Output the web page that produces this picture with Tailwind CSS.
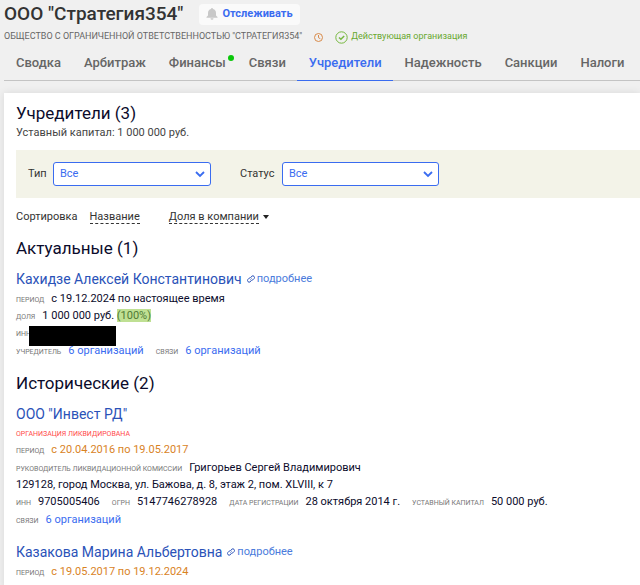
<!DOCTYPE html>
<html lang="ru">
<head>
  <meta charset="UTF-8">
  <meta name="viewport" content="width=device-width, initial-scale=1.0">
  <title>ООО "Стратегия354" - Учредители</title>
  <script src="https://cdn.jsdelivr.net/npm/@tailwindcss/browser@4"></script>
</head>
<body class="bg-[#f0f0f0] font-['Roboto','Liberation_Sans',sans-serif] text-[11px] text-[#0b0b2b] overflow-x-hidden">
  <!-- Company header -->
  <header class="pl-1">
    <div class="flex items-center h-7 gap-4">
      <h1 class="text-[19px] leading-7 font-medium text-[#333] whitespace-nowrap">ООО "Стратегия354"</h1>
      <button type="button" class="flex items-center gap-1 h-[21px] px-[7px] rounded bg-[#fafafa] font-bold text-[#3a6cf0]">
        <svg class="w-3 h-3" viewBox="0 0 12 12" fill="#c8c8c8"><path d="M6 0a1 1 0 0 1 1 1c2 .5 3 2 3 4v2.500L11.500 9v.8H.5V9L2 7.500V5c0-2 1-3.500 3-4a1 1 0 0 1 1-1zM4.500 10.300h3a1.500 1.500 0 0 1-3 0z"/></svg>
        Отслеживать
      </button>
    </div>
    <div class="flex items-center h-[18px] whitespace-nowrap text-[9px] text-[#666]">
      <span>ОБЩЕСТВО С ОГРАНИЧЕННОЙ ОТВЕТСТВЕННОСТЬЮ "СТРАТЕГИЯ354"</span>
      <svg class="ml-3 w-[9px] h-[9px]" viewBox="0 0 9 9" fill="none" stroke="#d98a4a"><circle cx="4.500" cy="4.500" r="4"/><path d="M4.500 2v2.700l1.800 1"/></svg>
      <span class="ml-3 flex items-center gap-[3px] text-[#69a82f]">
        <svg class="w-[13px] h-[13px]" viewBox="0 0 13 13" fill="none" stroke="#76b83f"><circle cx="6.500" cy="6.500" r="5.700"/><path d="M4 6.500l1.900 1.800 3.300-3.400" stroke-width="1.500"/></svg>
        Действующая организация
      </span>
    </div>
    <nav class="flex h-[35px] border-b border-[#c4c4c4] text-[13px] leading-[34px] font-medium text-[#666] whitespace-nowrap">
      <a href="#" class="pl-3 pr-[11px]">Сводка</a>
      <a href="#" class="pl-3 pr-[11px]">Арбитраж</a>
      <a href="#" class="pl-3 pr-[11px] relative">Финансы<span class="absolute right-[3px] top-[9px] w-[6px] h-[6px] rounded-full bg-[#0ac70a]"></span></a>
      <a href="#" class="pl-3 pr-[11px]">Связи</a>
      <a href="#" class="pl-3 pr-[11px] h-[35px] text-[#3a6cf0] border-b border-[#3a6cf0]">Учредители</a>
      <a href="#" class="pl-3 pr-[11px]">Надежность</a>
      <a href="#" class="pl-3 pr-[11px]">Санкции</a>
      <a href="#" class="pl-3 pr-[11px]">Налоги</a>
    </nav>
  </header>

  <main class="mt-3 ml-1 pl-3 pt-2 pb-2 bg-white shadow-[0_0_8px_rgba(0,0,0,0.1)] whitespace-nowrap">
    <h2 class="text-[17px] leading-6">Учредители (3)</h2>
    <p class="leading-4 text-[#444]">Уставный капитал: 1 000 000 руб.</p>

    <!-- Filters -->
    <form class="flex items-center mt-[9px] h-12 px-3 bg-[#f3f3e8] text-[#333]">
      <label for="type" class="w-[25px]">Тип</label>
      <div class="relative">
        <select id="type" class="appearance-none w-[158px] h-6 pl-[6px] rounded-[3px] border border-[#3a6cf0] bg-white text-[#3a6cf0]">
          <option>Все</option>
        </select>
        <svg class="absolute right-[6px] top-[9px] w-[10px] h-[7px] pointer-events-none" viewBox="0 0 10 7" fill="none" stroke="#3a6cf0" stroke-width="1.800"><path d="M1 1l4 4 4-4"/></svg>
      </div>
      <label for="status" class="ml-[29px] w-[42px]">Статус</label>
      <div class="relative">
        <select id="status" class="appearance-none w-[157px] h-6 pl-[6px] rounded-[3px] border border-[#3a6cf0] bg-white text-[#3a6cf0]">
          <option>Все</option>
        </select>
        <svg class="absolute right-[6px] top-[9px] w-[10px] h-[7px] pointer-events-none" viewBox="0 0 10 7" fill="none" stroke="#3a6cf0" stroke-width="1.800"><path d="M1 1l4 4 4-4"/></svg>
      </div>
    </form>

    <!-- Sorting -->
    <div class="flex items-center mt-[11px] text-[#333]">
      <span class="leading-4">Сортировка</span>
      <a href="#" class="ml-3 leading-3 border-b border-dashed border-[#333]">Название</a>
      <a href="#" class="ml-[29px] leading-3 border-b border-dashed border-[#333]">Доля в компании</a>
      <svg class="ml-1 w-[6px] h-1" viewBox="0 0 6 4" fill="#222"><path d="M0 0h6L3 4z"/></svg>
    </div>

    <h2 class="mt-[11px] mb-2 text-[17px] leading-6">Актуальные (1)</h2>
    <section class="leading-[18px]">
      <h3 class="flex items-center gap-[5px] leading-[22px]">
        <a href="#" class="text-[14px] text-[#2a52b8]">Кахидзе Алексей Константинович</a>
        <a href="#" class="flex items-center gap-[2px] text-[#4a7bdc]">
          <svg class="w-2 h-2" viewBox="0 0 24 24" fill="none" stroke="#2a52b8" stroke-width="3"><path d="M10 14a5 5 0 0 0 7.500.5l4-4a5 5 0 0 0-7-7L12 6M14 10a5 5 0 0 0-7.500-.5l-4 4a5 5 0 0 0 7 7L12 18"/></svg>
          подробнее</a>
      </h3>
      <p><span class="mr-[7px] text-[7px] leading-none text-[#777]">ПЕРИОД</span>с 19.12.2024 по настоящее время</p>
      <p class="leading-4"><span class="mr-[7px] text-[7px] leading-none text-[#777]">ДОЛЯ</span>1 000 000 руб. <span class="bg-[#bfe093] text-[#4f7a35]">(100%)</span></p>
      <p class="relative"><span class="text-[7px] leading-none text-[#777]">ИНН</span><span class="absolute left-[13px] top-[2px] w-[87px] h-5 bg-black"></span></p>
      <p><span class="mr-[7px] text-[7px] leading-none text-[#777]">УЧРЕДИТЕЛЬ</span><a href="#" class="text-[#3a6cf0]">6 организаций</a><span class="ml-3 mr-[7px] text-[7px] leading-none text-[#777]">СВЯЗИ</span><a href="#" class="text-[#3a6cf0]">6 организаций</a></p>
    </section>

    <h2 class="mt-[11px] mb-2 text-[17px] leading-6">Исторические (2)</h2>
    <section class="leading-[18px]">
      <h3 class="leading-[22px]"><a href="#" class="text-[14px] text-[#2a52b8]">ООО "Инвест РД"</a></h3>
      <p class="text-[7px] leading-[14px] text-[#ff4a4a]">ОРГАНИЗАЦИЯ ЛИКВИДИРОВАНА</p>
      <p class="text-[#d9831f]"><span class="mr-[7px] text-[7px] leading-none text-[#777]">ПЕРИОД</span>с 20.04.2016 по 19.05.2017</p>
      <p><span class="mr-[7px] text-[7px] leading-none text-[#777]">РУКОВОДИТЕЛЬ ЛИКВИДАЦИОННОЙ КОМИССИИ</span>Григорьев Сергей Владимирович</p>
      <p class="leading-4">129128, город Москва, ул. Бажова, д. 8, этаж 2, пом. XLVIII, к 7</p>
      <p class="flex gap-3">
        <span><span class="mr-[7px] text-[7px] leading-none text-[#777]">ИНН</span>9705005406</span>
        <span><span class="mr-[7px] text-[7px] leading-none text-[#777]">ОГРН</span>5147746278928</span>
        <span><span class="mr-[7px] text-[7px] leading-none text-[#777]">ДАТА РЕГИСТРАЦИИ</span>28 октября 2014 г.</span>
        <span><span class="mr-[7px] text-[7px] leading-none text-[#777]">УСТАВНЫЙ КАПИТАЛ</span>50 000 руб.</span>
      </p>
      <p><span class="mr-[7px] text-[7px] leading-none text-[#777]">СВЯЗИ</span><a href="#" class="text-[#3a6cf0]">6 организаций</a></p>
    </section>

    <section class="mt-3 leading-[18px]">
      <h3 class="flex items-center gap-[5px] leading-[22px]">
        <a href="#" class="text-[14px] text-[#2a52b8]">Казакова Марина Альбертовна</a>
        <a href="#" class="flex items-center gap-[2px] text-[#4a7bdc]">
          <svg class="w-2 h-2" viewBox="0 0 24 24" fill="none" stroke="#2a52b8" stroke-width="3"><path d="M10 14a5 5 0 0 0 7.500.5l4-4a5 5 0 0 0-7-7L12 6M14 10a5 5 0 0 0-7.500-.5l-4 4a5 5 0 0 0 7 7L12 18"/></svg>
          подробнее</a>
      </h3>
      <p class="text-[#d9831f]"><span class="mr-[7px] text-[7px] leading-none text-[#777]">ПЕРИОД</span>с 19.05.2017 по 19.12.2024</p>
    </section>
  </main>
</body>
</html>
